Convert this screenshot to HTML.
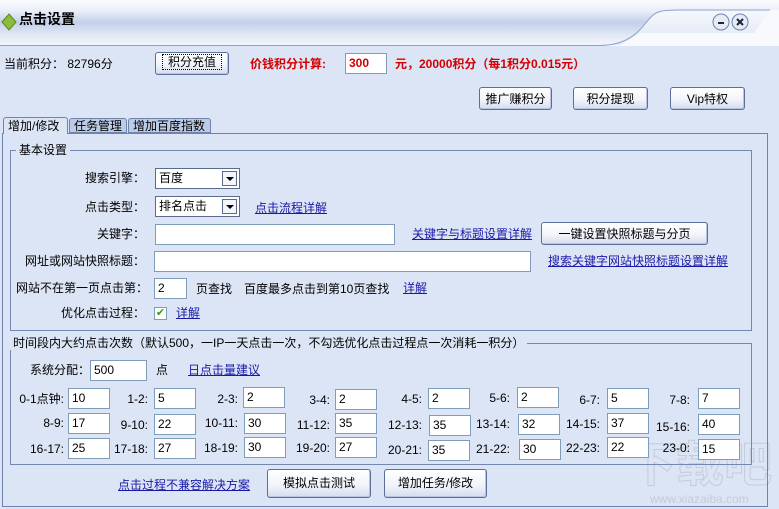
<!DOCTYPE html>
<html><head><meta charset="utf-8"><style>
*{margin:0;padding:0;box-sizing:border-box}
body{width:779px;height:509px;overflow:hidden;background:#dce5f5;font-family:"Liberation Sans","Noto Sans CJK SC","WenQuanYi Zen Hei",sans-serif;font-size:12px;color:#000;position:relative}
.a{position:absolute;white-space:nowrap;line-height:14px}
.r{text-align:right}
.in{position:absolute;background:#fff;border:1px solid #7f9db9;height:21px;font-size:12px;padding:2px 3px;line-height:14px}
.btn{position:absolute;border:1px solid #5a6f9a;border-radius:3px;background:linear-gradient(#ffffff,#f2f4fb 55%,#d5dcee);text-align:center;font-size:12px;line-height:22px;box-shadow:inset -1px -1px 0 #b9c4de}
.lk{color:#1a1aa8;text-decoration:underline}
.red{color:#d40000;font-weight:bold}
.grp{position:absolute;border:1px solid #7487b0}
.gt{position:absolute;background:#dce5f5;padding:0 3px;line-height:14px;white-space:nowrap}
.sel{position:absolute;background:#fff;border:1px solid #5b6b8c;height:21px;padding:2px 3px;line-height:14px}
.sel i{position:absolute;right:2px;top:2px;width:15px;height:15px;border:1px solid #5b6b8c;background:#f3f5fb}
.sel i:after{content:"";position:absolute;left:3px;top:5px;border-left:4px solid transparent;border-right:4px solid transparent;border-top:4px solid #000}
</style></head><body>
<svg class="a" style="left:0;top:0" width="779" height="50">
<defs><linearGradient id="g" x1="0" y1="0" x2="0" y2="1"><stop offset="0" stop-color="#fbfcfe"/><stop offset="0.25" stop-color="#e8eef8"/><stop offset="0.5" stop-color="#c3d0ea"/><stop offset="0.8" stop-color="#e4eaf6"/><stop offset="1" stop-color="#f2f5fb"/></linearGradient>
<linearGradient id="g2" x1="0" y1="0" x2="0" y2="1"><stop offset="0" stop-color="#f6f8fc"/><stop offset="1" stop-color="#dfe6f4"/></linearGradient></defs>
<rect x="0" y="0" width="779" height="50" fill="#f7f9fd"/>
<path d="M0,0 H620 V45 H0Z" fill="url(#g)"/>
<path d="M600,45 C630,45 640,30 650,18 C656,11 662,10 680,10 H770 L754,33 H640 L620,45Z" fill="url(#g2)"/>
<path d="M600,0 H779 V10 H680 C662,10 656,11 650,18 C640,30 630,45 600,45Z" fill="url(#g)"/>
<path d="M0,45.5 H600 C630,45 640,30 650,18 C656,11 662,10 680,10 H770" fill="none" stroke="#8ea3cc" stroke-width="1"/>
<rect x="0" y="46" width="779" height="4" fill="#dce5f5"/>
<path d="M2,22 L9,14 L16,22 L9,30Z" fill="#8dbb3c" stroke="#5a8a1a"/>
<circle cx="721" cy="22" r="8" fill="#e6ebf7" stroke="#6f82ad"/><rect x="718" y="22" width="6" height="2" fill="#223"/>
<circle cx="740" cy="22" r="8" fill="#e6ebf7" stroke="#6f82ad"/><path d="M737,19 L743,25 M743,19 L737,25" stroke="#223" stroke-width="2"/>
</svg>
<div class="a" style="left:19px;top:12px;font-weight:bold;font-size:14px">点击设置</div>

<div class="a" style="left:4px;top:57px">当前积分： 82796分</div>
<div class="btn" style="left:155px;top:52px;width:74px;height:23px;line-height:19px"><span style="border:1px dotted #000;padding:0 5px">积分充值</span></div>
<div class="a red" style="left:250px;top:57px">价钱积分计算:</div>
<div class="in" style="left:345px;top:53px;width:42px;color:#d40000;font-weight:bold">300</div>
<div class="a red" style="left:395px;top:57px">元，20000积分（每1积分0.015元）</div>
<div class="btn" style="left:479px;top:87px;width:73px;height:23px">推广赚积分</div>
<div class="btn" style="left:573px;top:87px;width:75px;height:23px">积分提现</div>
<div class="btn" style="left:670px;top:87px;width:75px;height:23px">Vip特权</div>

<div class="a" style="left:628px;top:440px;font-size:48px;line-height:52px;color:transparent;-webkit-text-stroke:1px #c4ccd9;font-weight:bold">下载吧</div>
<div class="a" style="left:650px;top:492px;font-size:12px;color:#c4cbd8">www.xiazaiba.com</div>

<div class="a" style="left:2px;top:133px;width:766px;height:374px;border:1px solid #6f83ad"></div>
<div class="a" style="left:3px;top:117px;width:65px;height:17px;border:1px solid #6f83ad;border-bottom:none;border-radius:3px 3px 0 0;background:#dce5f5;padding:1px 4px">增加/修改</div>
<div class="a" style="left:69px;top:118px;width:58px;height:15px;border:1px solid #6f83ad;border-radius:3px 3px 0 0;background:#bccbe6;padding:0 4px">任务管理</div>
<div class="a" style="left:128px;top:118px;width:83px;height:15px;border:1px solid #6f83ad;border-radius:3px 3px 0 0;background:#bccbe6;padding:0 4px">增加百度指数</div>

<div class="grp" style="left:10px;top:150px;width:742px;height:181px"></div>
<div class="gt" style="left:16px;top:143px">基本设置</div>
<div class="a r" style="left:20px;top:171px;width:125px">搜索引擎：</div>
<div class="sel" style="left:155px;top:168px;width:85px">百度<i></i></div>
<div class="a r" style="left:20px;top:200px;width:125px">点击类型：</div>
<div class="sel" style="left:155px;top:196px;width:85px">排名点击<i></i></div>
<div class="a lk" style="left:255px;top:201px">点击流程详解</div>
<div class="a r" style="left:20px;top:227px;width:125px">关键字：</div>
<div class="in" style="left:155px;top:224px;width:240px"></div>
<div class="a lk" style="left:412px;top:227px">关键字与标题设置详解</div>
<div class="btn" style="left:541px;top:222px;width:167px;height:23px">一键设置快照标题与分页</div>
<div class="a r" style="left:10px;top:254px;width:135px">网址或网站快照标题：</div>
<div class="in" style="left:154px;top:251px;width:377px"></div>
<div class="a lk" style="left:548px;top:254px">搜索关键字网站快照标题设置详解</div>
<div class="a" style="left:16px;top:281px">网站不在第一页点击第：</div>
<div class="in" style="left:154px;top:278px;width:33px">2</div>
<div class="a" style="left:196px;top:282px">页查找　百度最多点击到第10页查找</div>
<div class="a lk" style="left:403px;top:281px">详解</div>
<div class="a r" style="left:20px;top:306px;width:125px">优化点击过程：</div>
<div class="a" style="left:154px;top:307px;width:13px;height:13px;border:1px solid #7f9db9;background:#fff;color:#3a9a1a;font-size:11px;line-height:11px;text-align:center">✔</div>
<div class="a lk" style="left:176px;top:306px">详解</div>

<div class="grp" style="left:10px;top:343px;width:742px;height:122px"></div>
<div class="gt" style="left:10px;top:336px">时间段内大约点击次数（默认500，一IP一天点击一次，不勾选优化点击过程点一次消耗一积分）</div>
<div class="a" style="left:30px;top:363px">系统分配：</div>
<div class="in" style="left:90px;top:360px;width:57px">500</div>
<div class="a" style="left:156px;top:363px">点</div>
<div class="a lk" style="left:188px;top:363px">日点击量建议</div>

<div class="a r" style="left:0;top:392px;width:64px">0-1点钟:</div><div class="in" style="left:68px;top:388px;width:42px">10</div>
<div class="a r" style="left:100px;top:392px;width:48px">1-2:</div><div class="in" style="left:154px;top:388px;width:42px">5</div>
<div class="a r" style="left:190px;top:392px;width:48px">2-3:</div><div class="in" style="left:243px;top:387px;width:42px">2</div>
<div class="a r" style="left:280px;top:393px;width:50px">3-4:</div><div class="in" style="left:335px;top:389px;width:42px">2</div>
<div class="a r" style="left:372px;top:392px;width:50px">4-5:</div><div class="in" style="left:428px;top:388px;width:42px">2</div>
<div class="a r" style="left:460px;top:391px;width:50px">5-6:</div><div class="in" style="left:517px;top:387px;width:42px">2</div>
<div class="a r" style="left:550px;top:393px;width:50px">6-7:</div><div class="in" style="left:607px;top:388px;width:42px">5</div>
<div class="a r" style="left:640px;top:393px;width:50px">7-8:</div><div class="in" style="left:698px;top:388px;width:42px">7</div>

<div class="a r" style="left:0;top:416px;width:64px">8-9:</div><div class="in" style="left:68px;top:413px;width:42px">17</div>
<div class="a r" style="left:100px;top:418px;width:48px">9-10:</div><div class="in" style="left:154px;top:414px;width:42px">22</div>
<div class="a r" style="left:190px;top:416px;width:48px">10-11:</div><div class="in" style="left:244px;top:413px;width:42px">30</div>
<div class="a r" style="left:280px;top:418px;width:50px">11-12:</div><div class="in" style="left:335px;top:413px;width:42px">35</div>
<div class="a r" style="left:372px;top:418px;width:50px">12-13:</div><div class="in" style="left:429px;top:415px;width:42px">35</div>
<div class="a r" style="left:460px;top:417px;width:50px">13-14:</div><div class="in" style="left:518px;top:414px;width:42px">32</div>
<div class="a r" style="left:550px;top:417px;width:50px">14-15:</div><div class="in" style="left:607px;top:413px;width:42px">37</div>
<div class="a r" style="left:640px;top:420px;width:50px">15-16:</div><div class="in" style="left:698px;top:414px;width:42px">40</div>

<div class="a r" style="left:0;top:442px;width:64px">16-17:</div><div class="in" style="left:68px;top:438px;width:42px">25</div>
<div class="a r" style="left:100px;top:442px;width:48px">17-18:</div><div class="in" style="left:154px;top:438px;width:42px">27</div>
<div class="a r" style="left:190px;top:441px;width:48px">18-19:</div><div class="in" style="left:244px;top:437px;width:42px">30</div>
<div class="a r" style="left:280px;top:441px;width:50px">19-20:</div><div class="in" style="left:335px;top:437px;width:42px">27</div>
<div class="a r" style="left:372px;top:443px;width:50px">20-21:</div><div class="in" style="left:428px;top:440px;width:42px">35</div>
<div class="a r" style="left:460px;top:442px;width:50px">21-22:</div><div class="in" style="left:519px;top:439px;width:42px">30</div>
<div class="a r" style="left:550px;top:441px;width:50px">22-23:</div><div class="in" style="left:607px;top:437px;width:42px">22</div>
<div class="a r" style="left:640px;top:441px;width:50px">23-0:</div><div class="in" style="left:698px;top:439px;width:42px">15</div>

<div class="a lk" style="left:118px;top:478px">点击过程不兼容解决方案</div>
<div class="btn" style="left:267px;top:469px;width:104px;height:29px;line-height:26px">模拟点击测试</div>
<div class="btn" style="left:384px;top:469px;width:103px;height:29px;line-height:26px">增加任务/修改</div>
</body></html>
